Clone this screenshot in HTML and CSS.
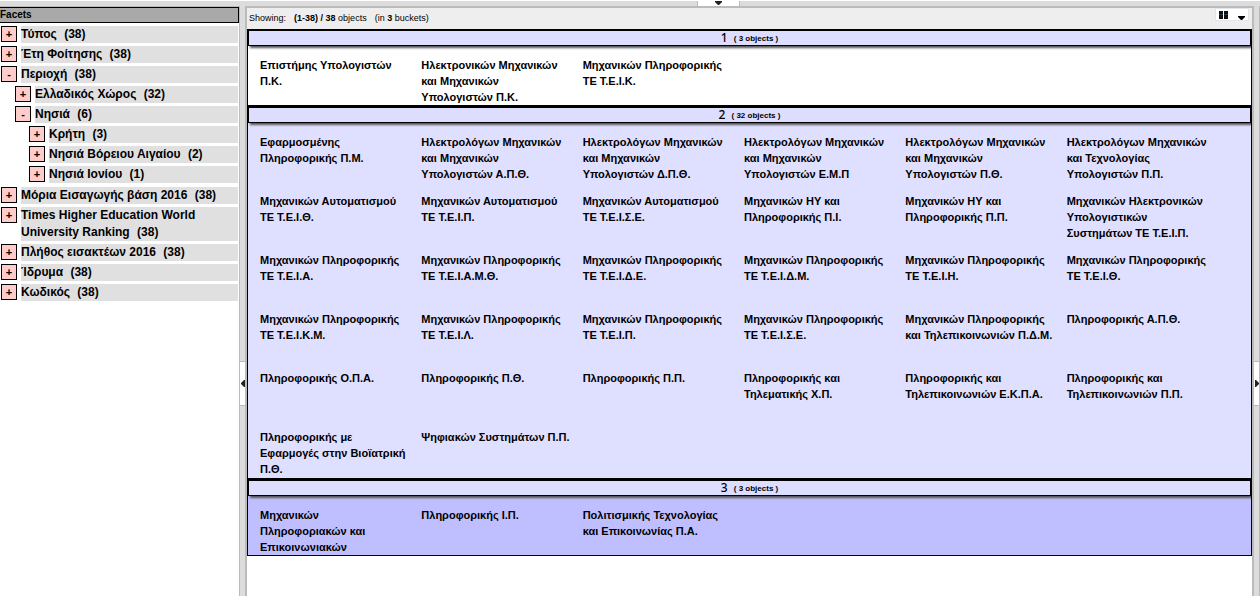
FILE: index.html
```html
<!DOCTYPE html>
<html lang="el">
<head>
<meta charset="utf-8">
<title>Facets</title>
<link rel="stylesheet" href="styles.css">
</head>
<body>
<div class="top-bar">
  <button class="handle handle-top" aria-label="Top panel"><svg width="7" height="5" viewBox="0 0 7 5"><path d="M0 0H7V1L4 4H3L0 1Z" fill="#222"/></svg></button>
</div>
<div class="workspace">
  <aside class="sidebar">
    <h1 class="sidebar-title">Facets</h1>
    <ul class="facets">
      <li><div class="facet"><button class="toggle">+</button><span class="label">Τύπος <span class="count">(38)</span></span></div></li>
      <li><div class="facet"><button class="toggle">+</button><span class="label">Έτη Φοίτησης <span class="count">(38)</span></span></div></li>
      <li><div class="facet"><button class="toggle">-</button><span class="label">Περιοχή <span class="count">(38)</span></span></div>
        <ul class="facets nested">
          <li><div class="facet"><button class="toggle">+</button><span class="label">Ελλαδικός Χώρος <span class="count">(32)</span></span></div></li>
          <li><div class="facet"><button class="toggle">-</button><span class="label">Νησιά <span class="count">(6)</span></span></div>
            <ul class="facets nested">
              <li><div class="facet"><button class="toggle">+</button><span class="label">Κρήτη <span class="count">(3)</span></span></div></li>
              <li><div class="facet"><button class="toggle">+</button><span class="label">Νησιά Βόρειου Αιγαίου <span class="count">(2)</span></span></div></li>
              <li><div class="facet"><button class="toggle">+</button><span class="label">Νησιά Ιονίου <span class="count">(1)</span></span></div></li>
            </ul>
          </li>
        </ul>
      </li>
      <li><div class="facet"><button class="toggle">+</button><span class="label">Μόρια Εισαγωγής βάση 2016 <span class="count">(38)</span></span></div></li>
      <li><div class="facet"><button class="toggle">+</button><span class="label">Times Higher Education World University Ranking <span class="count">(38)</span></span></div></li>
      <li><div class="facet"><button class="toggle">+</button><span class="label">Πλήθος εισακτέων 2016 <span class="count">(38)</span></span></div></li>
      <li><div class="facet"><button class="toggle">+</button><span class="label">Ίδρυμα <span class="count">(38)</span></span></div></li>
      <li><div class="facet"><button class="toggle">+</button><span class="label">Κωδικός <span class="count">(38)</span></span></div></li>
    </ul>
  </aside>
  <div class="splitter splitter-left">
    <button class="handle handle-side" aria-label="Left panel"><svg width="4" height="7" viewBox="0 0 4 7"><path d="M4 0V7H3L0 4V3L3 0Z" fill="#222"/></svg></button>
  </div>
  <main class="results">
    <div class="toolbar">
      <p class="status"><span>Showing:</span><span><b>(1-38)</b> <b>/</b> <b>38</b> objects</span><span>(in <b>3</b> buckets)</span></p>
      <button class="view-menu" aria-label="View">
        <svg width="9" height="8" viewBox="0 0 9 8"><path d="M0 0H4V3H0ZM5 0H9V3H5ZM0 4H4V8H0ZM5 4H9V8H5Z" fill="#111"/><path d="M0 3H4V4H0ZM5 3H9V4H5Z" fill="#234"/></svg>
        <svg class="caret" width="7" height="4" viewBox="0 0 7 4"><path d="M0 0H7V1L4 4H3L0 1Z" fill="#000"/></svg>
      </button>
    </div>
    <section class="bucket bucket-1">
      <h2 class="bucket-title">1 <small>( 3 objects )</small></h2>
      <ul class="items">
        <li>Επιστήμης Υπολογιστών<br>Π.Κ.</li>
        <li>Ηλεκτρονικών Μηχανικών<br>και Μηχανικών<br>Υπολογιστών Π.Κ.</li>
        <li>Μηχανικών Πληροφορικής<br>ΤΕ Τ.Ε.Ι.Κ.</li>
      </ul>
    </section>
    <section class="bucket bucket-2">
      <h2 class="bucket-title">2 <small>( 32 objects )</small></h2>
      <ul class="items">
        <li>Εφαρμοσμένης<br>Πληροφορικής Π.Μ.</li>
        <li>Ηλεκτρολόγων Μηχανικών<br>και Μηχανικών<br>Υπολογιστών Α.Π.Θ.</li>
        <li>Ηλεκτρολόγων Μηχανικών<br>και Μηχανικών<br>Υπολογιστών Δ.Π.Θ.</li>
        <li>Ηλεκτρολόγων Μηχανικών<br>και Μηχανικών<br>Υπολογιστών Ε.Μ.Π</li>
        <li>Ηλεκτρολόγων Μηχανικών<br>και Μηχανικών<br>Υπολογιστών Π.Θ.</li>
        <li>Ηλεκτρολόγων Μηχανικών<br>και Τεχνολογίας<br>Υπολογιστών Π.Π.</li>
        <li>Μηχανικών Αυτοματισμού<br>ΤΕ Τ.Ε.Ι.Θ.</li>
        <li>Μηχανικών Αυτοματισμού<br>ΤΕ Τ.Ε.Ι.Π.</li>
        <li>Μηχανικών Αυτοματισμού<br>ΤΕ Τ.Ε.Ι.Σ.Ε.</li>
        <li>Μηχανικών ΗΥ και<br>Πληροφορικής Π.Ι.</li>
        <li>Μηχανικών ΗΥ και<br>Πληροφορικής Π.Π.</li>
        <li>Μηχανικών Ηλεκτρονικών<br>Υπολογιστικών<br>Συστημάτων ΤΕ Τ.Ε.Ι.Π.</li>
        <li>Μηχανικών Πληροφορικής<br>ΤΕ Τ.Ε.Ι.Α.</li>
        <li>Μηχανικών Πληροφορικής<br>ΤΕ Τ.Ε.Ι.Α.Μ.Θ.</li>
        <li>Μηχανικών Πληροφορικής<br>ΤΕ Τ.Ε.Ι.Δ.Ε.</li>
        <li>Μηχανικών Πληροφορικής<br>ΤΕ Τ.Ε.Ι.Δ.Μ.</li>
        <li>Μηχανικών Πληροφορικής<br>ΤΕ Τ.Ε.Ι.Η.</li>
        <li>Μηχανικών Πληροφορικής<br>ΤΕ Τ.Ε.Ι.Θ.</li>
        <li>Μηχανικών Πληροφορικής<br>ΤΕ Τ.Ε.Ι.Κ.Μ.</li>
        <li>Μηχανικών Πληροφορικής<br>ΤΕ Τ.Ε.Ι.Λ.</li>
        <li>Μηχανικών Πληροφορικής<br>ΤΕ Τ.Ε.Ι.Π.</li>
        <li>Μηχανικών Πληροφορικής<br>ΤΕ Τ.Ε.Ι.Σ.Ε.</li>
        <li>Μηχανικών Πληροφορικής<br>και Τηλεπικοινωνιών Π.Δ.Μ.</li>
        <li>Πληροφορικής Α.Π.Θ.</li>
        <li>Πληροφορικής Ο.Π.Α.</li>
        <li>Πληροφορικής Π.Θ.</li>
        <li>Πληροφορικής Π.Π.</li>
        <li>Πληροφορικής και<br>Τηλεματικής Χ.Π.</li>
        <li>Πληροφορικής και<br>Τηλεπικοινωνιών Ε.Κ.Π.Α.</li>
        <li>Πληροφορικής και<br>Τηλεπικοινωνιών Π.Π.</li>
        <li>Πληροφορικής με<br>Εφαρμογές στην Βιοϊατρική<br>Π.Θ.</li>
        <li>Ψηφιακών Συστημάτων Π.Π.</li>
      </ul>
    </section>
    <section class="bucket bucket-3">
      <h2 class="bucket-title">3 <small>( 3 objects )</small></h2>
      <ul class="items">
        <li>Μηχανικών<br>Πληροφοριακών και<br>Επικοινωνιακών</li>
        <li>Πληροφορικής Ι.Π.</li>
        <li>Πολιτισμικής Τεχνολογίας<br>και Επικοινωνίας Π.Α.</li>
      </ul>
    </section>
  </main>
  <div class="splitter splitter-right">
    <button class="handle handle-side" aria-label="Right panel"><svg width="4" height="7" viewBox="0 0 4 7"><path d="M0 0V7H1L4 4V3L1 0Z" fill="#222"/></svg></button>
  </div>
</div>
</body>
</html>
```
FILE: styles.css
```css
* { box-sizing: border-box; }

body {
  margin: 0;
  min-height: 100vh;
  display: flex;
  flex-direction: column;
  background: #fff;
  color: #000;
  font-family: "Liberation Sans", Arial, sans-serif;
}

button {
  margin: 0;
  padding: 0;
  color: inherit;
  font-family: inherit;
}

ul, p, h1, h2 { margin: 0; padding: 0; list-style: none; }

.top-bar {
  display: flex;
  height: 6px;
  padding-left: 176px;
  justify-content: center;
  background: #dcdcdc;
  border-top: 1px solid #fff;
}

.handle {
  display: flex;
  align-items: center;
  justify-content: center;
  background: #fff;
  border: 0 solid #bbb;
}

.handle-top { width: 43px; height: 5px; border-width: 0 1px; }
.handle-side { width: 5px; height: 45px; border-width: 1px 0; }

.workspace { display: flex; flex: 1; }

.sidebar { width: 239px; border-top: 1px solid #bbb; }

.sidebar-title {
  height: 16px;
  background: #a9a9a9;
  border: 1px solid #000;
  border-left: 0;
  font-size: 10px;
  line-height: 14px;
}

.facets { display: flex; flex-direction: column; gap: 3px; }
.sidebar > .facets { padding: 3px 1px 0; }
.facets.nested { padding: 3px 0 0 14px; }
.sidebar > .facets > li > .nested { padding-bottom: 1px; }

.facet { display: flex; gap: 4px; align-items: flex-start; }

.toggle {
  flex: none;
  width: 16px;
  height: 16px;
  background: #fcc;
  border: 1px solid #000;
  font-size: 11px;
  font-weight: bold;
  line-height: 14px;
}

.label {
  flex: 1;
  background: #e0e0e0;
  font-size: 12px;
  font-weight: bold;
  line-height: 17px;
}

.count { margin-left: 4px; }

.splitter {
  display: flex;
  flex-direction: column;
  flex: none;
  width: 8px;
  padding-top: 355px;
  background: #dcdcdc;
  border: 0 solid #bbb;
}

.splitter-left { border-width: 0 2px 0 1px; }
.splitter-right { border-width: 0 1px 0 2px; }

.results { flex: 1; min-width: 0; border-top: 2px solid #bbb; }

.toolbar {
  display: flex;
  align-items: flex-start;
  justify-content: space-between;
  height: 21px;
  padding: 0 3px 0 2px;
  background: #eee;
}

.status { display: flex; gap: 8px; font-size: 9px; line-height: 20px; }

.view-menu {
  display: flex;
  align-items: center;
  gap: 10px;
  width: 34px;
  height: 13px;
  padding: 0 3px;
  background: #fff;
  border: 1px solid #e4e4ec;
}

.caret { align-self: flex-end; }

.bucket { overflow: hidden; border: 1px solid #000; }
.bucket-1 { background: #fff; }
.bucket-2 { background: #dfdfff; padding-bottom: 1px; }
.bucket-3 { background: #bfbfff; }

.bucket-title {
  height: 16px;
  background: #ddf;
  border: 1px solid #000;
  box-shadow: 2px 2px 2px #555;
  font-family: "Noto Sans", sans-serif;
  font-size: 12px;
  font-weight: 500;
  line-height: 14px;
  text-align: center;
}

.bucket-title small {
  padding-left: 3px;
  font-family: "Liberation Sans", Arial, sans-serif;
  font-size: 8px;
  font-weight: bold;
  line-height: 8px;
  vertical-align: 1px;
}

.items {
  display: grid;
  grid-template-columns: repeat(6, 1fr);
  grid-auto-rows: 59px;
  padding: 0 23px 0 12px;
  font-size: 11px;
  font-weight: bold;
  line-height: 16px;
  white-space: nowrap;
}

.items li { padding-top: 11px; }
```
